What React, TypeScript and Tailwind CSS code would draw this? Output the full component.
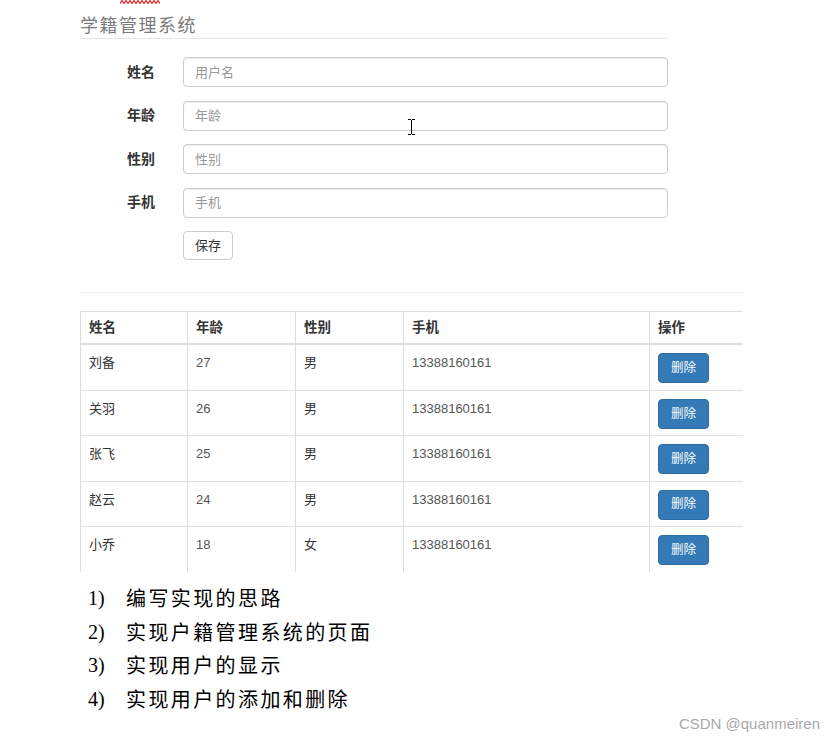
import React from "react";

const sans = "font-['Liberation_Sans','Noto_Sans_CJK_SC',sans-serif]";

const rows = [
  { name: "刘备", age: "27", sex: "男", phone: "13388160161" },
  { name: "关羽", age: "26", sex: "男", phone: "13388160161" },
  { name: "张飞", age: "25", sex: "男", phone: "13388160161" },
  { name: "赵云", age: "24", sex: "男", phone: "13388160161" },
  { name: "小乔", age: "18", sex: "女", phone: "13388160161" },
];

const fields = [
  { label: "姓名", ph: "用户名" },
  { label: "年龄", ph: "年龄" },
  { label: "性别", ph: "性别" },
  { label: "手机", ph: "手机" },
];

const items = [
  "编写实现的思路",
  "实现户籍管理系统的页面",
  "实现用户的显示",
  "实现用户的添加和删除",
];

const cols = "grid grid-cols-[107px_108px_108px_246px_94px]";

export default function App() {
  return (
    <div className={`relative w-[835px] h-[742px] overflow-hidden bg-white ${sans}`}>
      <div className="pl-[80px]">
        {/* red squiggle */}
        <div className="h-[4px] ml-[40px]">
          <svg width="40" height="4" viewBox="0 0 40 4" className="block">
            <polyline
              points="0,3.5 2,0.5 4,3.5 6,0.5 8,3.5 10,0.5 12,3.5 14,0.5 16,3.5 18,0.5 20,3.5 22,0.5 24,3.5 26,0.5 28,3.5 30,0.5 32,3.5 34,0.5 36,3.5 38,0.5 40,3.5"
              fill="none"
              stroke="#f03030"
              strokeWidth="1.3"
            />
          </svg>
        </div>
        {/* title */}
        <div className="w-[588px] pt-[8px] pb-[2px] border-b border-[#e5e5e5]">
          <div className="text-[18px] leading-[24px] tracking-[1.5px] text-[#7a7a7a] font-['Noto_Sans_CJK_SC',sans-serif]">
            学籍管理系统
          </div>
        </div>
        {/* form */}
        <div className="mt-[18px] flex flex-col gap-[13.6px]">
          {fields.map((f) => (
            <div key={f.label} className="flex items-center h-[30px]">
              <div className="ml-[47px] w-[56px] text-[14px] font-bold text-[#333]">{f.label}</div>
              <input
                placeholder={f.ph}
                className="w-[485px] h-[30px] rounded-[4px] border border-[#ccc] px-[11px] text-[13px] text-[#555] placeholder:text-[#999] shadow-[inset_0_1px_1px_rgba(0,0,0,0.075)] outline-none"
              />
            </div>
          ))}
          <div className="ml-[103px]">
            <button className="w-[50px] h-[29px] rounded-[4px] border border-[#ccc] bg-white text-[13px] text-[#333]">
              保存
            </button>
          </div>
        </div>
        {/* hr */}
        <div className="mt-[32px] w-[663px] border-t border-[#eee]" />
        {/* table */}
        <div className="mt-[18px] w-[663px] text-[13px] text-[#333]">
          <div className={`${cols} border-t border-b-2 border-[#ddd] h-[34px]`}>
            {["姓名", "年龄", "性别", "手机", "操作"].map((h) => (
              <div
                key={h}
                className="border-l border-[#ddd] px-[8px] flex items-center font-bold text-[13.5px]"
              >
                {h}
              </div>
            ))}
          </div>
          {rows.map((r, idx) => (
            <div
              key={r.name}
              className={`${cols} h-[45.4px] ${idx < rows.length - 1 ? "border-b border-[#ddd]" : ""}`}
            >
              <div className="border-l border-[#ddd] px-[8px] pt-[8px] leading-[20px]">{r.name}</div>
              <div className="border-l border-[#ddd] px-[8px] pt-[8px] leading-[20px] text-[#555]">{r.age}</div>
              <div className="border-l border-[#ddd] px-[8px] pt-[8px] leading-[20px]">{r.sex}</div>
              <div className="border-l border-[#ddd] px-[8px] pt-[8px] leading-[20px] text-[#555]">{r.phone}</div>
              <div className="border-l border-[#ddd] px-[8px] pt-[8px]">
                <button className="w-[51px] h-[30px] rounded-[4px] border border-[#2e6da4] bg-[#337ab7] text-white text-[12.5px] leading-none">
                  删除
                </button>
              </div>
            </div>
          ))}
        </div>
        {/* list */}
        <div className="mt-[9px] text-black">
          {items.map((t, i) => (
            <div key={t} className="flex h-[33.5px] items-center text-[20px]">
              <span className="ml-[8px] w-[38px] font-['Liberation_Serif',serif]">{i + 1})</span>
              <span className="tracking-[2.4px] font-['Noto_Sans_CJK_SC',sans-serif]">{t}</span>
            </div>
          ))}
        </div>
      </div>
      {/* text cursor */}
      <svg className="absolute left-[407px] top-[119px]" width="9" height="16" viewBox="0 0 9 16">
        <path d="M1 0.5H4M5 0.5H8M4.5 1V15M1 15.5H4M5 15.5H8" stroke="#000" strokeWidth="1" fill="none" />
      </svg>
      {/* watermark */}
      <div className="absolute right-[15px] bottom-[8px] text-[15px] leading-[20px] text-[#a8a8a8] font-['Liberation_Sans',sans-serif]">
        CSDN @quanmeiren
      </div>
    </div>
  );
}
